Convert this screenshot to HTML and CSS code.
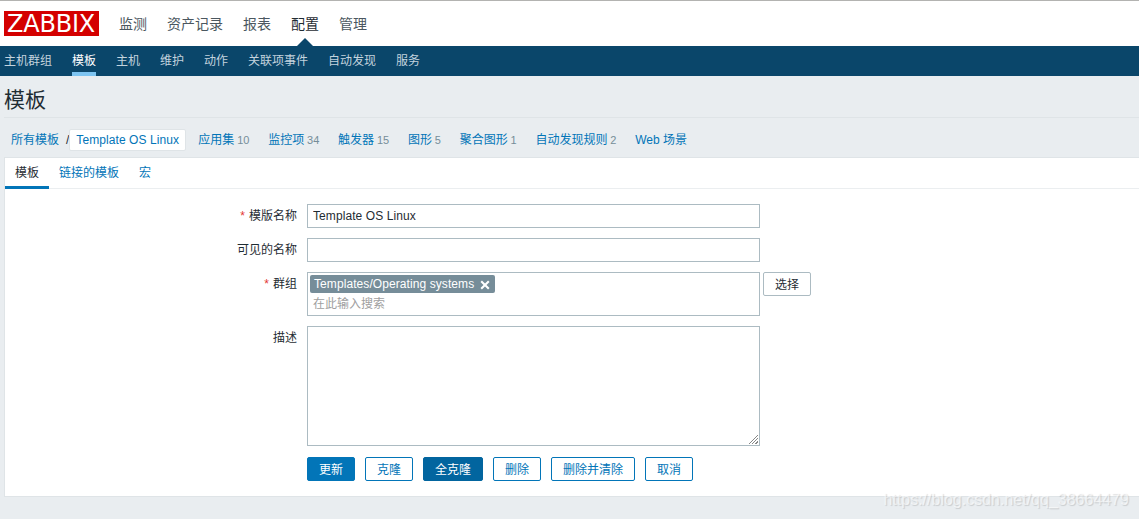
FILE: index.html
```html
<!DOCTYPE html>
<html lang="zh-CN">
<head>
    <meta charset="UTF-8">
    <meta name="viewport" content="width=device-width, initial-scale=1.0">
    <title>模板</title>
    <link rel="stylesheet" href="styles.css">
</head>
<body>
    <header class="header">
        <a class="logo">ZABBIX</a>
        <nav class="top-nav">
            <a>监测</a>
            <a>资产记录</a>
            <a>报表</a>
            <a class="selected">配置</a>
            <a>管理</a>
        </nav>
    </header>
    <nav class="sub-nav">
        <a>主机群组</a>
        <a class="selected">模板</a>
        <a>主机</a>
        <a>维护</a>
        <a>动作</a>
        <a>关联项事件</a>
        <a>自动发现</a>
        <a>服务</a>
    </nav>

    <main class="content">
        <h1>模板</h1>
        <div class="object-nav">
            <a class="all">所有模板</a>
            <span class="slash">/</span>
            <a class="current">Template OS Linux</a>
            <span class="object"><a>应用集</a><sup>10</sup></span>
            <span class="object"><a>监控项</a><sup>34</sup></span>
            <span class="object"><a>触发器</a><sup>15</sup></span>
            <span class="object"><a>图形</a><sup>5</sup></span>
            <span class="object"><a>聚合图形</a><sup>1</sup></span>
            <span class="object"><a>自动发现规则</a><sup>2</sup></span>
            <span class="object"><a>Web 场景</a></span>
        </div>

        <div class="panel">
            <div class="tabs">
                <a class="selected">模板</a>
                <a>链接的模板</a>
                <a>宏</a>
            </div>
            <form class="form">
                <label class="required" for="template_name">模版名称</label>
                <input type="text" id="template_name" value="Template OS Linux">

                <label for="visiblename">可见的名称</label>
                <input type="text" id="visiblename">

                <label class="required">群组</label>
                <div class="group-field">
                    <div class="multiselect">
                        <span class="tag">Templates/Operating systems
                            <svg width="10" height="10" viewBox="0 0 10 10"><path d="M1.2 1.2l7.6 7.6M8.8 1.2L1.2 8.8" stroke="#fff" stroke-width="2.1"/></svg>
                        </span>
                        <span class="placeholder">在此输入搜索</span>
                    </div>
                    <button type="button" class="btn-grey">选择</button>
                </div>

                <label for="description">描述</label>
                <textarea id="description"></textarea>

                <div class="buttons">
                    <button type="button" class="primary">更新</button>
                    <button type="button">克隆</button>
                    <button type="button" class="primary focused">全克隆</button>
                    <button type="button">删除</button>
                    <button type="button">删除并清除</button>
                    <button type="button">取消</button>
                </div>
            </form>
        </div>
    </main>
    <div class="watermark">https://blog.csdn.net/qq_38664479</div>
</body>
</html>
```
FILE: styles.css
```css
* {
    box-sizing: border-box;
}

body {
    margin: 0;
    height: 519px;
    overflow: hidden;
    background: #e9edf0;
    color: #1f2c33;
    font: 12px/18px "Liberation Sans", "Noto Sans CJK SC", sans-serif;
}

a {
    color: #0275b8;
    text-decoration: none;
    white-space: nowrap;
}

button, input, textarea {
    font: inherit;
    color: inherit;
}

.header {
    display: flex;
    align-items: center;
    height: 46px;
    padding-left: 4px;
    background: #fff;
    border-top: 1px solid #b3b3b1;
}

.logo {
    width: 95px;
    height: 25px;
    padding-left: 3px;
    background: #d40000;
    color: #fff;
    font: 24px/27px "DejaVu Sans", sans-serif;
    letter-spacing: -0.2px;
}

.top-nav {
    display: flex;
    gap: 20px;
    height: 45px;
    margin-left: 20px;
    font-size: 14px;
    line-height: 47px;
}

.top-nav a {
    position: relative;
    color: #4b5760;
}

.top-nav .selected {
    color: #1f2c33;
}

/* arrow that points from the sub menu to the open section */
.top-nav .selected::after {
    content: "";
    position: absolute;
    left: 6px;
    bottom: 0;
    border: 8px solid transparent;
    border-top: 0;
    border-bottom-color: #0a466a;
}

.sub-nav {
    display: flex;
    gap: 20px;
    height: 30px;
    padding-left: 4px;
    background: #0a466a;
    line-height: 30px;
}

.sub-nav a {
    height: 30px;
    color: #c3d3de;
}

.sub-nav .selected {
    color: #fff;
    border-bottom: 4px solid #7dc4f1;
}

.content {
    padding-left: 4px;
}

h1 {
    margin: 0;
    height: 42px;
    border-bottom: 1px solid #dfe4e7;
    font-size: 21px;
    font-weight: normal;
    line-height: 47px;
}

.object-nav {
    display: flex;
    height: 39px;
    padding: 11px 0 6px 7px;
    line-height: 22px;
}

.object-nav .slash {
    margin-left: 7px;
}

.object-nav .current {
    width: 117px;
    height: 22px;
    margin-right: 12px;
    padding: 0 6px;
    background: #fff;
    border: 1px solid #dfe4e7;
    border-radius: 2px;
    letter-spacing: 0.08px;
    line-height: 21px;
}

.object {
    margin-right: 18.8px;
}

.object sup {
    margin-left: 2.8px;
    color: #768d99;
    font-size: 11px;
    line-height: 1;
    vertical-align: baseline;
}

.panel {
    height: 340px;
    background: #fff;
    border: 1px solid #dfe4e7;
    border-right: 0;
}

.tabs {
    display: flex;
    height: 31px;
    border-bottom: 1px solid #ebeef0;
    line-height: 31px;
}

.tabs a {
    height: 31px;
    padding: 0 10px;
}

.tabs .selected {
    color: #1f2c33;
    border-bottom: 3px solid #0275b8;
}

.form {
    display: grid;
    grid-template-columns: 292px auto;
    gap: 10px;
    padding-top: 15px;
}

.form label {
    padding-top: 3px;
    text-align: right;
}

.required::before {
    content: "*";
    margin-right: 4px;
    color: #e33734;
}

.form input, .form textarea, .multiselect {
    display: block;
    width: 453px;
    height: 24px;
    margin: 0;
    padding: 0 5px;
    background: #fff;
    border: 1px solid #acbbc2;
    border-radius: 0;
    outline: 0;
    letter-spacing: 0.08px;
}

.form textarea {
    height: 120px;
}

.form textarea::-webkit-resizer {
    background-image: linear-gradient(135deg, #fff 50%, transparent 50%), repeating-linear-gradient(135deg, #888 0 1px, #fff 1px 2.4px);
    background-position: right 1px bottom 1px;
    background-size: 10px 10px;
    background-repeat: no-repeat;
}

.group-field {
    display: flex;
    gap: 3px;
}

.form .multiselect {
    height: 44px;
    padding: 2px;
}

.tag {
    display: flex;
    align-items: center;
    justify-content: space-between;
    width: 185px;
    height: 18px;
    padding: 0 5px 0 4px;
    background: #768d99;
    border-radius: 2px;
    color: #fff;
}

.tag svg {
    margin-top: 2px;
}

.placeholder {
    display: block;
    padding: 2px 3px 0;
    color: #a0a0a0;
    letter-spacing: 0;
}

.form button {
    height: 24px;
    padding: 1px 11px 0;
    background: #fff;
    border: 1px solid #0275b8;
    border-radius: 2px;
    color: #0275b8;
    line-height: 22px;
}

.form .btn-grey {
    border-color: #acbbc2;
    color: #1f2c33;
}

.buttons {
    grid-column: 2;
    display: flex;
    gap: 10px;
    margin-top: 1px;
}

.form .primary {
    background: #0275b8;
    color: #fff;
}

.form .focused {
    background: #02659f;
    border-color: #02659f;
}

.watermark {
    position: absolute;
    right: 10px;
    bottom: 9px;
    color: rgba(255, 255, 255, 0.6);
    font-size: 16px;
    line-height: 20px;
    text-shadow: 1px 1px 1px rgba(0, 0, 0, 0.14);
}
```
